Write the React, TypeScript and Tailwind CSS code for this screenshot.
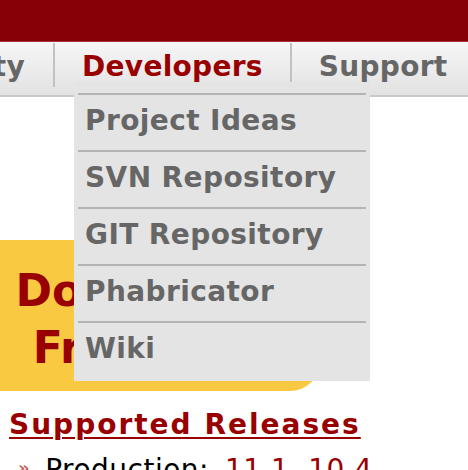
const font = { fontFamily: '"DejaVu Sans", Verdana, sans-serif' };

const menuItems = ['Project Ideas', 'SVN Repository', 'GIT Repository', 'Phabricator', 'Wiki'];

function NavItem({ label, active, first, last }: { label: string; active?: boolean; first?: boolean; last?: boolean }) {
  return (
    <div
      className={`flex h-[44px] shrink-0 items-start ${last ? '' : 'border-r-2 border-[#c2c2c2]'} ${
        first ? 'w-[55px] justify-end overflow-hidden pr-[28px]' : 'px-[27px]'
      }`}
    >
      <span
        className={`whitespace-nowrap pt-[8px] text-[28px] font-bold leading-[32px] tracking-[0.3px] ${
          active ? 'text-[#990000]' : 'text-[#666666]'
        }`}
      >
        {label}
      </span>
    </div>
  );
}

export default function App() {
  return (
    <div className="relative h-[470px] w-[468px] overflow-hidden bg-white" style={font}>
      {/* Header */}
      <div className="h-[42px] border-b border-[#a4343a] bg-[#870008]" />

      {/* Nav */}
      <nav className="flex h-[55px] border-b-2 border-[#c9c9c9] bg-gradient-to-b from-[#f6f6f6] to-[#e2e2e2] pt-[1px]">
        <NavItem label="Community" first />
        <NavItem label="Developers" active />
        <NavItem label="Support" last />
      </nav>

      {/* Download box */}
      <div className="mt-[143px] flex h-[151px] w-[320px] flex-col items-center justify-center rounded-r-[30px] bg-[#f9c942] pr-[44px] pt-[6px]">
        <span className="text-[44px] font-bold leading-[57px] text-[#990000]">Download</span>
        <span className="text-[44px] font-bold leading-[57px] text-[#990000]">FreeBSD</span>
      </div>

      {/* Releases */}
      <div className="pl-[9px] pt-[18px]">
        <h2 className="whitespace-nowrap text-[28px] font-bold leading-[32px] tracking-[2px] text-[#990000] underline decoration-[2px] underline-offset-[3px]">
          Supported Releases
        </h2>
        <div className="mt-[13px] flex items-start whitespace-nowrap pl-[9px] text-[28px] leading-[32px] tracking-[0.5px]">
          <span className="mr-[15px] mt-[5px] text-[18px] font-bold leading-[18px] text-[#c06060]">»</span>
          <span className="text-black">Production:</span>
          <span className="ml-[16px] text-[#990000]">11.1, 10.4</span>
        </div>
      </div>

      {/* Developers dropdown */}
      <div className="absolute left-[74px] top-[82px] w-[296px] bg-[#e4e4e4] px-[4px] pb-[3px] pt-[11px]">
        {menuItems.map(item => (
          <div key={item} className="h-[57px] border-t-2 border-[#b4b4b4] pl-[7px]">
            <span className="block whitespace-nowrap pt-[10px] text-[28px] font-bold leading-[32px] tracking-[0.4px] text-[#666666]">
              {item}
            </span>
          </div>
        ))}
      </div>
    </div>
  );
}
